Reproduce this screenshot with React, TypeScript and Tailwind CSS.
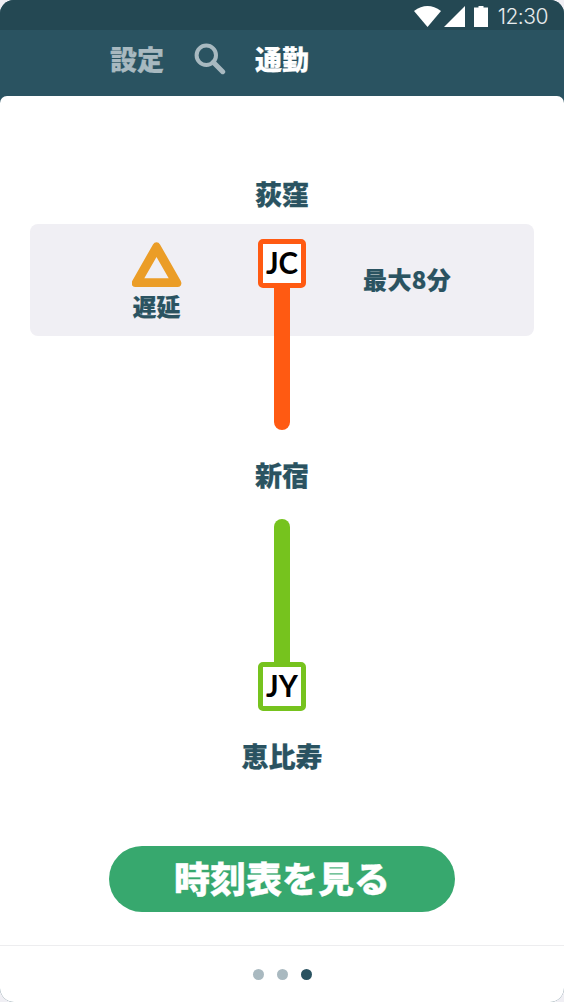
import React from "react";

function StatusBar() {
  return (
    <div className="flex h-[30px] items-center justify-end bg-[#244853] pr-4">
      <svg className="h-[30px] w-[90px]" viewBox="0 0 90 30" fill="#fff">
        <path d="M0 11 Q13.5 1 27 11 L13.5 27 Z" />
        <path d="M30 27 L51 6 V27 Z" />
        <path d="M60 7.5 H64.5 V6 H69.5 V7.5 H74 V27 H60 Z" />
      </svg>
      <span className="-ml-[6px] mt-[3px] whitespace-nowrap font-['Inter',sans-serif] text-[21px] font-light leading-[30px] tracking-[-0.5px] text-white/90">
        12:30
      </span>
    </div>
  );
}

function NavBar() {
  return (
    <nav className="flex h-[66px] pl-[110px] text-[27px] leading-[58px] text-[#a8b9c0] [-webkit-text-stroke:0.25px]">
      <span className="w-[84px]">設定</span>
      <svg className="mt-[13px] h-8 w-[61px]" viewBox="0 0 61 32" fill="none" stroke="#a8b9c0">
        <circle cx="12.3" cy="12.3" r="9.7" strokeWidth="4" />
        <path d="M19.3 19.3 L28.7 28.7" strokeWidth="5" strokeLinecap="round" />
      </svg>
      <span className="text-white">通勤</span>
    </nav>
  );
}

function LineBadge({ code, className }: { code: string; className: string }) {
  return (
    <div
      className={`flex h-[49px] w-[48px] items-center justify-center rounded-[5px] border-[5px] bg-white pb-[2px] font-['Lato',sans-serif] text-[29.5px] font-bold leading-none text-black ${className}`}
    >
      {code}
    </div>
  );
}

function Station({ name }: { name: string }) {
  return (
    <h2 className="text-center text-[27px] leading-10 [-webkit-text-stroke:0.25px]">{name}</h2>
  );
}

export default function App() {
  return (
    <div className="h-[1002px] w-[564px] bg-[#f0eff4]">
      <div className="flex h-full flex-col overflow-hidden rounded-[14px] bg-[#2a5361] font-['Noto_Sans_CJK_JP',sans-serif] font-black text-[#2a5361]">
        <StatusBar />
        <NavBar />
        <main className="flex flex-1 flex-col rounded-t-[7px] bg-white">
          <div className="mt-[78px]">
            <Station name="荻窪" />
          </div>

          <section className="mx-[30px] mt-[10px] grid h-[112px] grid-cols-[228px_48px_228px] rounded-[8px] bg-[#f0eff4]">
            <div className="flex flex-col items-center pl-[25px] pt-[17px]">
              <svg className="h-[47px] w-[50px]" viewBox="0 0 50 47">
                <path
                  d="M24.5 1.2 Q26.8 1.2 28 3.4 L48.8 40 Q50 42.4 48.8 44.4 Q47.6 46 45.3 46 H3.7 Q1.4 46 0.2 44.4 Q-1 42.4 0.2 40 L21 3.4 Q22.2 1.2 24.5 1.2 Z M24.5 16 L12.3 37.2 H36.7 Z"
                  fill="#eb9d27"
                  fillRule="evenodd"
                />
              </svg>
              <span className="text-[24px] leading-9 [-webkit-text-stroke:0.2px]">遅延</span>
            </div>
            <div className="flex h-[206px] flex-col items-center pt-[15px]">
              <LineBadge code="JC" className="border-[#ff5a12]" />
              <div className="-mt-px w-4 flex-1 rounded-b-full bg-[#ff5a12]" />
            </div>
            <span className="pl-[57px] text-[24px] leading-[110px] tracking-[0.4px] [-webkit-text-stroke:0.2px]">
              最大8分
            </span>
          </section>

          <div className="mt-[119px]">
            <Station name="新宿" />
          </div>

          <div className="mt-[24px] flex h-[192px] flex-col items-center">
            <div className="-mb-px w-4 flex-1 rounded-t-full bg-[#76c31e]" />
            <LineBadge code="JY" className="border-[#76c31e]" />
          </div>

          <div className="mt-[25px]">
            <Station name="恵比寿" />
          </div>

          <button className="mx-auto mt-[70px] h-[66px] w-[346px] rounded-full bg-[#37a86e] pb-[4px] text-[36px] leading-[62px] text-white [-webkit-text-stroke:0.3px]">
            時刻表を見る
          </button>

          <footer className="mt-auto flex h-[57px] items-center justify-center gap-[13px] border-t border-[#ededef]">
            <i className="size-[11px] rounded-full bg-[#a9b9c0]" />
            <i className="size-[11px] rounded-full bg-[#a9b9c0]" />
            <i className="size-[11px] rounded-full bg-[#2a5361]" />
          </footer>
        </main>
      </div>
    </div>
  );
}
